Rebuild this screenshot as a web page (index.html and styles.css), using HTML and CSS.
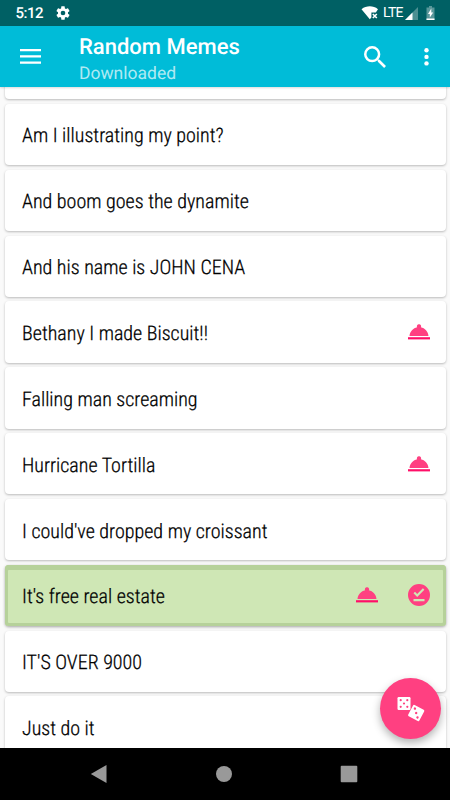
FILE: index.html
```html
<!DOCTYPE html>
<html lang="en">
<head>
    <meta charset="UTF-8">
    <meta name="viewport" content="width=device-width, initial-scale=1.0">
    <title>Random Memes</title>
    <link rel="stylesheet" href="styles.css">
</head>
<body>
    <!-- shared icons -->
    <svg class="sprite">
        <symbol id="bell" viewBox="0 0 24 24">
            <path fill="#ff4081" d="M13.9 7.300A2.010 2.010 0 0 0 12 4.300a2.010 2.010 0 0 0-1.900 3C6.250 8.100 2.900 11.600 2.500 16h19c-.4-4.400-3.700-7.900-7.600-8.700z"/>
            <path fill="#ff0f68" d="M1 17.200h22v2.200H1z"/>
        </symbol>
    </svg>

    <div class="screen">
        <!-- status bar -->
        <div class="status-bar">
            <span class="time">5:12</span>
            <svg class="gear" viewBox="0 0 24 24"><path fill="#fff" d="M19.43 12.98c.04-.32.07-.64.07-.98s-.03-.66-.07-.98l2.11-1.65c.19-.15.24-.42.12-.64l-2-3.46c-.12-.22-.39-.3-.61-.22l-2.49 1c-.52-.4-1.08-.73-1.69-.98l-.38-2.65A.49.49 0 0 0 14 2h-4c-.25 0-.46.18-.49.42l-.38 2.65c-.61.25-1.17.59-1.69.98l-2.49-1c-.23-.09-.49 0-.61.22l-2 3.46c-.13.22-.07.49.12.64l2.11 1.65c-.04.32-.07.65-.07.98s.03.66.07.98l-2.11 1.65c-.19.15-.24.42-.12.64l2 3.46c.12.22.39.3.61.22l2.49-1c.52.4 1.08.73 1.69.98l.38 2.65c.03.24.24.42.49.42h4c.25 0 .46-.18.49-.42l.38-2.65c.61-.25 1.17-.59 1.69-.98l2.49 1c.23.09.49 0 .61-.22l2-3.46c.12-.22.07-.49-.12-.64zM12 15.5a3.5 3.5 0 1 1 0-7 3.5 3.5 0 0 1 0 7z"/></svg>
            <svg class="wifi" viewBox="0 0 18 14">
                <path fill="#fff" d="M.5 3.2C3 1.2 5.900 .3 8.800 .3s5.800.9 8.200 2.900L14.800 6.500H10.400V11.500L8.800 13.300z"/>
                <path stroke="#fff" stroke-width="1.600" d="M11.800 8l4 4M15.800 8l-4 4"/>
            </svg>
            <span class="network">LTE</span>
            <svg class="signal" viewBox="0 0 13 13">
                <path fill="#fff" fill-opacity=".3" d="M13 0v13H0z"/>
                <path fill="#fff" d="M7.500 5.500V13H0z"/>
            </svg>
            <svg class="battery" viewBox="0 0 9 14">
                <path fill="#fff" fill-opacity=".35" d="M3 0h3v1.500h2.500V14H.5V1.500H3z"/>
                <path fill="#fff" d="M.5 12.500h8V14h-8zM5.300 2.500v4h1.900L3.800 11.600V8H2z"/>
            </svg>
        </div>

        <!-- toolbar -->
        <div class="toolbar">
            <svg class="menu" viewBox="0 0 21 15"><path fill="#fff" d="M0 0h21v2.300H0zM0 6.300h21v2.300H0zM0 12.500h21v2.300H0z"/></svg>
            <div class="titles">
                <div class="title">Random Memes</div>
                <div class="subtitle">Downloaded</div>
            </div>
            <svg class="search" viewBox="3 3 17.500 17.500"><path fill="#fff" d="M15.500 14h-.79l-.28-.27A6.470 6.470 0 0 0 16 9.500 6.500 6.500 0 1 0 9.500 16c1.610 0 3.090-.59 4.230-1.570l.27.28v.79l5 4.990L20.490 19zm-6 0a4.500 4.500 0 1 1 0-9 4.500 4.500 0 0 1 0 9z"/></svg>
            <svg class="more" viewBox="0 0 5 19"><g fill="#fff"><circle cx="2.500" cy="3.300" r="2.200"/><circle cx="2.500" cy="9.900" r="2.200"/><circle cx="2.500" cy="16.400" r="2.200"/></g></svg>
        </div>

        <!-- sound list -->
        <div class="list">
            <div class="card"></div>
            <div class="card"><span class="name">Am I illustrating my point?</span></div>
            <div class="card"><span class="name">And boom goes the dynamite</span></div>
            <div class="card"><span class="name">And his name is JOHN CENA</span></div>
            <div class="card"><span class="name">Bethany I made Biscuit!!</span><svg class="icon"><use href="#bell"/></svg></div>
            <div class="card"><span class="name">Falling man screaming</span></div>
            <div class="card"><span class="name">Hurricane Tortilla</span><svg class="icon"><use href="#bell"/></svg></div>
            <div class="card"><span class="name">I could've dropped my croissant</span></div>
            <div class="card selected">
                <span class="name">It's free real estate</span>
                <svg class="icon"><use href="#bell"/></svg>
                <svg class="icon" viewBox="0 0 24 24"><path fill="#ff4081" d="M12 1a11 11 0 1 0 0 22 11 11 0 0 0 0-22zm5.500 17.300h-11v-2.200h11zm-7.300-4.300L6.500 10.300l1.500-1.500 2.200 2.200 5.700-5.700L17.400 6.800z"/></svg>
            </div>
            <div class="card"><span class="name">IT'S OVER 9000</span></div>
            <div class="card"><span class="name">Just do it</span></div>
        </div>

        <!-- navigation bar -->
        <div class="nav-bar">
            <svg viewBox="0 0 18 18"><path fill="#999" d="M16.500 0v18L.800 9z"/></svg>
            <svg viewBox="0 0 18 18"><circle fill="#999" cx="9" cy="9" r="8"/></svg>
            <svg viewBox="0 0 18 18"><rect fill="#999" x=".7" y=".7" width="16.600" height="16.600" rx="1"/></svg>
        </div>

        <!-- random button -->
        <div class="fab">
            <svg viewBox="0 0 28 26">
                <rect fill="#fff" x=".5" y="1" width="13" height="13" rx="1.200"/>
                <g fill="#ff4081"><circle cx="3.700" cy="4.200" r="1.100"/><circle cx="10.300" cy="4.200" r="1.100"/><circle cx="7" cy="7.500" r="1.100"/><circle cx="3.700" cy="10.800" r="1.100"/><circle cx="10.300" cy="10.800" r="1.100"/></g>
                <g transform="rotate(28 19.200 17)">
                    <rect fill="#fff" x="12.900" y="10.700" width="12.600" height="12.600" rx="1.200"/>
                    <g fill="#ff4081"><circle cx="16" cy="13.700" r="1.200"/><circle cx="19.200" cy="17" r="1.200"/><circle cx="22.400" cy="20.300" r="1.200"/></g>
                </g>
            </svg>
        </div>
    </div>
</body>
</html>
```
FILE: styles.css
```css
body {
    margin: 0;
    font-family: Roboto, sans-serif;
    background-color: #fafafa;
    text-rendering: geometricPrecision;
}

.sprite {
    display: none;
}

svg {
    display: block;
    flex-shrink: 0;
}

.screen {
    position: relative;
    width: 450px;
    height: 800px;
    display: flex;
    flex-direction: column;
    overflow: hidden;
}

/* status bar */
.status-bar {
    height: 26px;
    flex-shrink: 0;
    box-sizing: border-box;
    padding: 0 15px 0 15.500px;
    display: flex;
    align-items: center;
    background-color: #006064;
    color: white;
}

.time {
    font-size: 15px;
    font-weight: 500;
    width: 39.500px;
    letter-spacing: -0.5px;
}

.gear {
    width: 16px;
    height: 16px;
}

.wifi {
    width: 18px;
    height: 14px;
    margin-left: auto;
}

.network {
    font-size: 14px;
    width: 22px;
    margin-left: 4px;
    letter-spacing: -0.7px;
}

.signal {
    width: 13px;
    height: 13px;
}

.battery {
    width: 9px;
    height: 14px;
    margin: 0 0 0 8px;
}

/* toolbar */
.toolbar {
    position: relative;
    z-index: 1;
    height: 61px;
    flex-shrink: 0;
    box-sizing: border-box;
    padding: 0 21.500px 0 20px;
    display: flex;
    align-items: center;
    background-color: #00bcd8;
    color: white;
    box-shadow: 0 1px 2px rgba(0, 0, 0, 0.15);
}

.menu {
    width: 21px;
    height: 15px;
}

.titles {
    flex: 1;
    padding: 7px 0 0 38px;
}

.title {
    font-size: 22px;
    font-weight: 500;
    line-height: 27px;
}

.subtitle {
    font-size: 17.500px;
    line-height: 26px;
    color: rgba(255, 255, 255, 0.7);
}

.search {
    width: 22px;
    height: 22px;
}

.more {
    width: 5px;
    height: 19px;
    margin-left: 37.500px;
}

/* list of cards */
.list {
    flex: 1;
    min-height: 0;
    overflow: hidden;
    padding: 0 4.500px;
}

.card {
    height: 61.300px;
    box-sizing: border-box;
    margin-bottom: 4.550px;
    padding: 0 15px 0 17.500px;
    display: flex;
    align-items: center;
    background-color: white;
    border-radius: 4px;
    box-shadow: 0 1px 2.500px rgba(0, 0, 0, 0.26);
}

.card:first-child {
    margin-top: -49px;
}

.card.selected {
    background-color: #cfe7b5;
    box-shadow: inset 0 0 0 3px #b6d19a, inset 0 3px 0 2px #b6d19a, 0 1px 3px rgba(0, 0, 0, 0.35);
}

.name {
    flex: 1;
    padding-top: 2px;
    font-family: "Roboto Condensed", Roboto, sans-serif;
    font-stretch: 75%;
    font-size: 20px;
    font-weight: 300;
    color: black;
    -webkit-text-stroke: 0.250px black;
}

.icon {
    width: 24px;
    height: 24px;
    margin-left: 28px;
}

/* navigation bar */
.nav-bar {
    position: relative;
    height: 52px;
    flex-shrink: 0;
    box-sizing: border-box;
    padding: 0 92px 0 90px;
    display: flex;
    align-items: center;
    justify-content: space-between;
    background-color: black;
}

.nav-bar svg {
    width: 18px;
    height: 18px;
}

/* floating button */
.fab {
    position: absolute;
    right: 9px;
    bottom: 61px;
    width: 61px;
    height: 61px;
    border-radius: 50%;
    display: flex;
    align-items: center;
    justify-content: center;
    background-color: #ff4081;
    box-shadow: 0 4px 8px rgba(0, 0, 0, 0.3);
}

.fab svg {
    width: 28px;
    height: 26px;
}
```
